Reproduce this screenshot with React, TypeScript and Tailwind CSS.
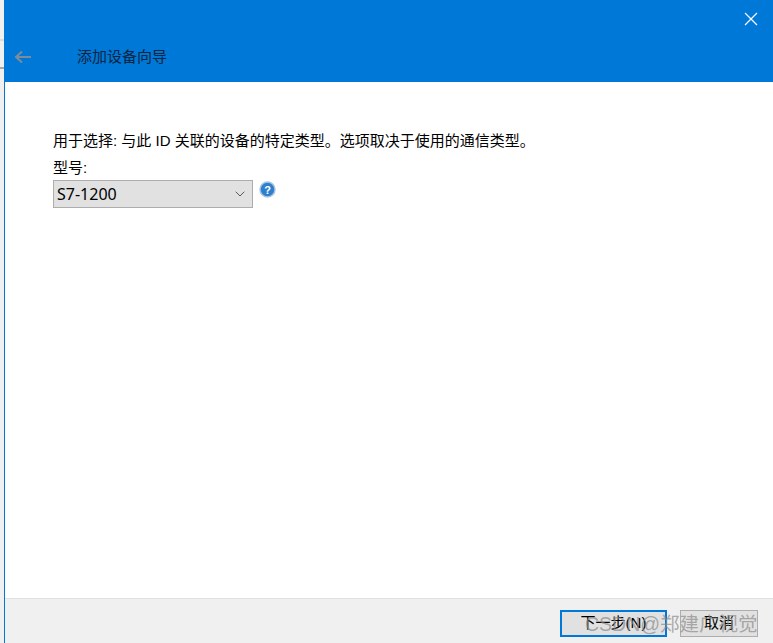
import { ChevronDown } from 'lucide-react';

const CJK = "font-['Liberation_Sans','Noto_Sans_CJK_SC',sans-serif]";

export default function App() {
  return (
    <div className={`relative h-[643px] w-[773px] overflow-hidden bg-white text-black ${CJK}`}>
      <div className="flex h-full">
        {/* strip of the window behind */}
        <div className="flex w-[4px] shrink-0 flex-col bg-[#f0f0f0] pt-[39px]">
          <div className="h-[2px] bg-[#dcdcdc]" />
          <div className="mt-[26px] h-[2px] bg-[#a8a8a8]" />
        </div>

        <div className="flex min-w-0 flex-1 flex-col border-l border-[#0078d7]">
          {/* title */}
          <header className="relative h-[82px] shrink-0 bg-[#0078d7]">
            <svg className="absolute right-[15px] top-[12px]" width="14" height="14" viewBox="0 0 14 14" fill="none" stroke="#fff" strokeWidth="1.2">
              <path d="M1 1l12 12M13 1L1 13" />
            </svg>
            <div className="absolute left-[72px] top-[47px] text-[15px] leading-[20px] text-[#0a2540]">添加设备向导</div>
          </header>

          {/* content */}
          <main className="flex-1 pl-[48px] pt-[49px]">
            <p className="text-[15px] leading-[20px]">用于选择: 与此 ID 关联的设备的特定类型。选项取决于使用的通信类型。</p>
            <p className="mt-[7px] text-[15px] leading-[20px]">型号:</p>
            <div className="mt-[2px] flex items-start gap-[6px]">
              <div className="flex h-[28px] w-[200px] items-center justify-between border border-[#adadad] bg-[#e1e1e1] pl-[3px] pr-[4px] font-['Noto_Sans',sans-serif] text-[16px]">
                <span>S7-1200</span>
                <ChevronDown className="h-[16px] w-[16px] text-[#444]" strokeWidth={1.3} />
              </div>
              <svg width="17" height="17" viewBox="0 0 17 17" className="mt-px">
                <circle cx="8.5" cy="8.5" r="7.5" fill="#2f7fd0" stroke="#a9c4dc" strokeWidth="1.5" />
                <text x="8.5" y="12.5" textAnchor="middle" fontSize="11" fontWeight="700" fill="#fff" fontFamily="Liberation Sans, sans-serif">?</text>
              </svg>
            </div>
          </main>

          {/* buttons */}
          <footer className="flex h-[45px] shrink-0 items-start justify-end gap-[13px] border-t border-[#dfdfdf] bg-[#f0f0f0] pr-[15px] pt-[11px]">
            <button className="h-[27px] w-[107px] border-2 border-[#0078d7] bg-[#e1e1e1] text-[15px]">下一步(N)</button>
            <button className="h-[27px] w-[78px] border border-[#adadad] bg-[#e1e1e1] text-[15px]">取消</button>
          </footer>
        </div>
      </div>

      {/* back arrow, disabled */}
      <svg className="absolute left-[14px] top-[50px]" width="17" height="14" viewBox="0 0 17 14" fill="none" stroke="#7d8c9a" strokeWidth="2">
        <path d="M2 7h15M8 1.5L2 7l6 5.5" />
      </svg>

      {/* watermark */}
      <div className="absolute left-[585px] top-[611px] text-[19.5px] leading-[26px] text-[#8a8a8a]/70">CSDN@郑建广视觉</div>
    </div>
  );
}
